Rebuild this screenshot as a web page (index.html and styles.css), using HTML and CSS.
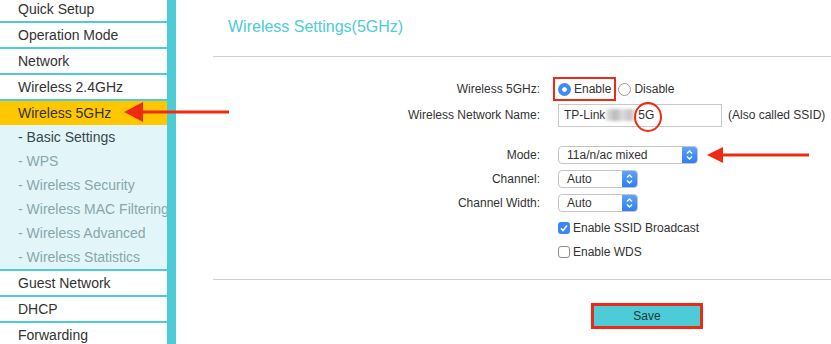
FILE: index.html
```html
<!DOCTYPE html>
<html lang="en">
<head>
  <meta charset="UTF-8" />
  <title>Wireless Settings (5GHz)</title>
  <link rel="stylesheet" href="styles.css">
</head>
<body>
<aside class="sidebar">
  <ul class="menu">
    <li class="item">Quick Setup</li>
    <li class="item">Operation Mode</li>
    <li class="item">Network</li>
    <li class="item">Wireless 2.4GHz</li>
    <li class="item active">Wireless 5GHz</li>
    <li class="sub">
      <ul>
        <li class="current">- Basic Settings</li>
        <li>- WPS</li>
        <li>- Wireless Security</li>
        <li>- Wireless MAC Filtering</li>
        <li>- Wireless Advanced</li>
        <li>- Wireless Statistics</li>
      </ul>
    </li>
    <li class="item">Guest Network</li>
    <li class="item">DHCP</li>
    <li class="item">Forwarding</li>
  </ul>
</aside>

<!-- annotation arrow pointing at the active menu entry -->
<svg class="pointer pointer-menu" width="106" height="20" viewBox="0 0 106 20">
  <polygon points="0,10 19,0 19,20" fill="#ee2b12"/>
  <line x1="17" y1="10" x2="105" y2="10" stroke="#ee2b12" stroke-width="3"/>
</svg>

<main class="content">
  <h2 class="title">Wireless Settings(5GHz)</h2>

  <div class="form">
    <div class="row">
      <span class="label">Wireless 5GHz:</span>
      <div class="field">
        <span class="choice mark"><i class="radio on"></i>Enable</span>
        <span class="choice"><i class="radio"></i>Disable</span>
      </div>
    </div>
    <div class="row row-name">
      <span class="label">Wireless Network Name:</span>
      <div class="field">
        <span class="text-input">TP-Link<span class="smudge"></span><span class="circled">5G</span></span>
        <span class="hint">(Also called SSID)</span>
      </div>
    </div>
    <div class="row row-mode">
      <span class="label">Mode:</span>
      <div class="field">
        <span class="select wide">11a/n/ac mixed<span class="step"><svg width="9" height="12" viewBox="0 0 9 12"><path d="M2 4.5 L4.5 2 L7 4.5 M2 7.5 L4.5 10 L7 7.5" fill="none" stroke="#fff" stroke-width="1.4"/></svg></span></span>
        <svg class="pointer-mode" width="103" height="16" viewBox="0 0 103 16">
          <polygon points="0,8 16,0 16,16" fill="#ee2b12"/>
          <line x1="14" y1="8" x2="102" y2="8" stroke="#ee2b12" stroke-width="3"/>
        </svg>
      </div>
    </div>
    <div class="row">
      <span class="label">Channel:</span>
      <div class="field">
        <span class="select">Auto<span class="step"><svg width="9" height="12" viewBox="0 0 9 12"><path d="M2 4.5 L4.5 2 L7 4.5 M2 7.5 L4.5 10 L7 7.5" fill="none" stroke="#fff" stroke-width="1.4"/></svg></span></span>
      </div>
    </div>
    <div class="row">
      <span class="label">Channel Width:</span>
      <div class="field">
        <span class="select">Auto<span class="step"><svg width="9" height="12" viewBox="0 0 9 12"><path d="M2 4.5 L4.5 2 L7 4.5 M2 7.5 L4.5 10 L7 7.5" fill="none" stroke="#fff" stroke-width="1.4"/></svg></span></span>
      </div>
    </div>
    <div class="row row-check">
      <span class="label"></span>
      <div class="field">
        <span class="choice"><i class="check on"><svg width="12" height="12" viewBox="0 0 12 12"><path d="M3 6.3 L5 8.5 L9 3.5" fill="none" stroke="#fff" stroke-width="1.6"/></svg></i>Enable SSID Broadcast</span>
      </div>
    </div>
    <div class="row">
      <span class="label"></span>
      <div class="field">
        <span class="choice"><i class="check"></i>Enable WDS</span>
      </div>
    </div>
  </div>

  <div class="actions">
    <button class="save">Save</button>
  </div>
</main>
</body>
</html>
```

FILE: styles.css
```css
/* Resets */
* { margin: 0; padding: 0; box-sizing: border-box; }
html, body {
  width: 100%; height: 100%; overflow: hidden;
  font-family: "Liberation Sans", Arial, Helvetica, sans-serif;
  color: #333; background: #fff;
}
body { display: flex; position: relative; }

/* Sidebar menu */
.sidebar {
  width: 176px; flex: none; height: 100%; overflow: hidden;
  border-right: 9px solid #4dcbd6;
}
.menu { list-style: none; margin-top: -3px; }
.menu ul { list-style: none; }
.item {
  height: 26px; line-height: 24px; padding-left: 18px;
  font-size: 14px; white-space: nowrap;
  border-bottom: 2px solid #4dcbd6;
}
.item.active { height: 24px; background: #ffc700; border-bottom: 0; }
.sub { background: #e2f6f9; border-bottom: 2px solid #4dcbd6; }
.sub li {
  height: 24px; line-height: 24px; padding-left: 18px;
  font-size: 14px; white-space: nowrap; color: #87a6ab;
}
.sub li.current { color: #37474b; }

/* Annotation arrows */
.pointer { position: absolute; }
.pointer-menu { left: 124px; top: 102px; }
.pointer-mode { margin-left: 9px; }

/* Content */
.content { flex: 1; padding-left: 37px; }
.title {
  font-size: 16px; font-weight: normal; line-height: 20px;
  color: #4dcbd6; padding: 17px 0 19px 15px;
  border-bottom: 1px solid #cfcfcf;
}

/* Form */
.form { padding-top: 20px; font-size: 12px; }
.row {
  display: grid; grid-template-columns: 327px 1fr; column-gap: 18px;
  align-items: center; height: 24px;
}
.row-name { margin-top: 2px; }
.row-mode { margin-top: 16px; }
.row-check { margin-top: 1px; }
.label { text-align: right; white-space: nowrap; }
.field { display: flex; align-items: center; white-space: nowrap; }

.choice { display: inline-flex; align-items: center; gap: 3px; }
.choice + .choice { margin-left: 7px; }
.mark { outline: 2px solid #ee2b12; outline-offset: 3px; }

.radio {
  display: inline-block; width: 13px; height: 13px; border-radius: 50%;
  border: 1px solid #9b9b9b; background: #fff;
}
.radio.on {
  border: 0;
  background: radial-gradient(circle, #fff 0 2px, #3c8cf4 2.6px);
}

.check {
  display: inline-flex; width: 12px; height: 12px; border-radius: 3px;
  border: 1px solid #8f8f8f; background: #fff;
}
.check.on { border: 0; background: #3a88f5; }

.text-input {
  display: inline-flex; align-items: center;
  width: 164px; height: 23px; padding-left: 5px;
  border: 1px solid #c9c9c9;
}
.smudge {
  display: inline-block; width: 30px; height: 12px; margin: 0 2px 0 1px;
  background: linear-gradient(90deg, #e4e4e4, #b9b9b9 30%, #dcdcdc 55%, #c4c4c4 80%, #ececec);
  filter: blur(1.5px);
}
.circled { position: relative; }
.circled::after {
  content: ""; position: absolute; left: -4px; top: -6px;
  width: 24px; height: 26px; border: 2px solid #ee2b12; border-radius: 50%;
}
.hint { margin-left: 6px; }

.select {
  display: inline-flex; align-items: center; justify-content: space-between;
  width: 80px; height: 18px; padding-left: 8px; overflow: hidden;
  border: 1px solid #c6c6c6; border-radius: 4px; background: #fff;
}
.select.wide { width: 140px; }
.step {
  display: flex; align-items: center; justify-content: center;
  width: 15px; height: 100%;
  background: linear-gradient(#5ea3fb, #2f7ff2);
}

/* Save */
.actions {
  margin-top: 15px; border-top: 1px solid #cfcfcf;
  padding: 23px 0 0 378px;
}
.save {
  width: 112px; height: 26px;
  border: 3px solid #ee2b12; background: #4dcbd6;
  font: 12px "Liberation Sans", Arial, sans-serif; color: #1e3a40;
}
```
